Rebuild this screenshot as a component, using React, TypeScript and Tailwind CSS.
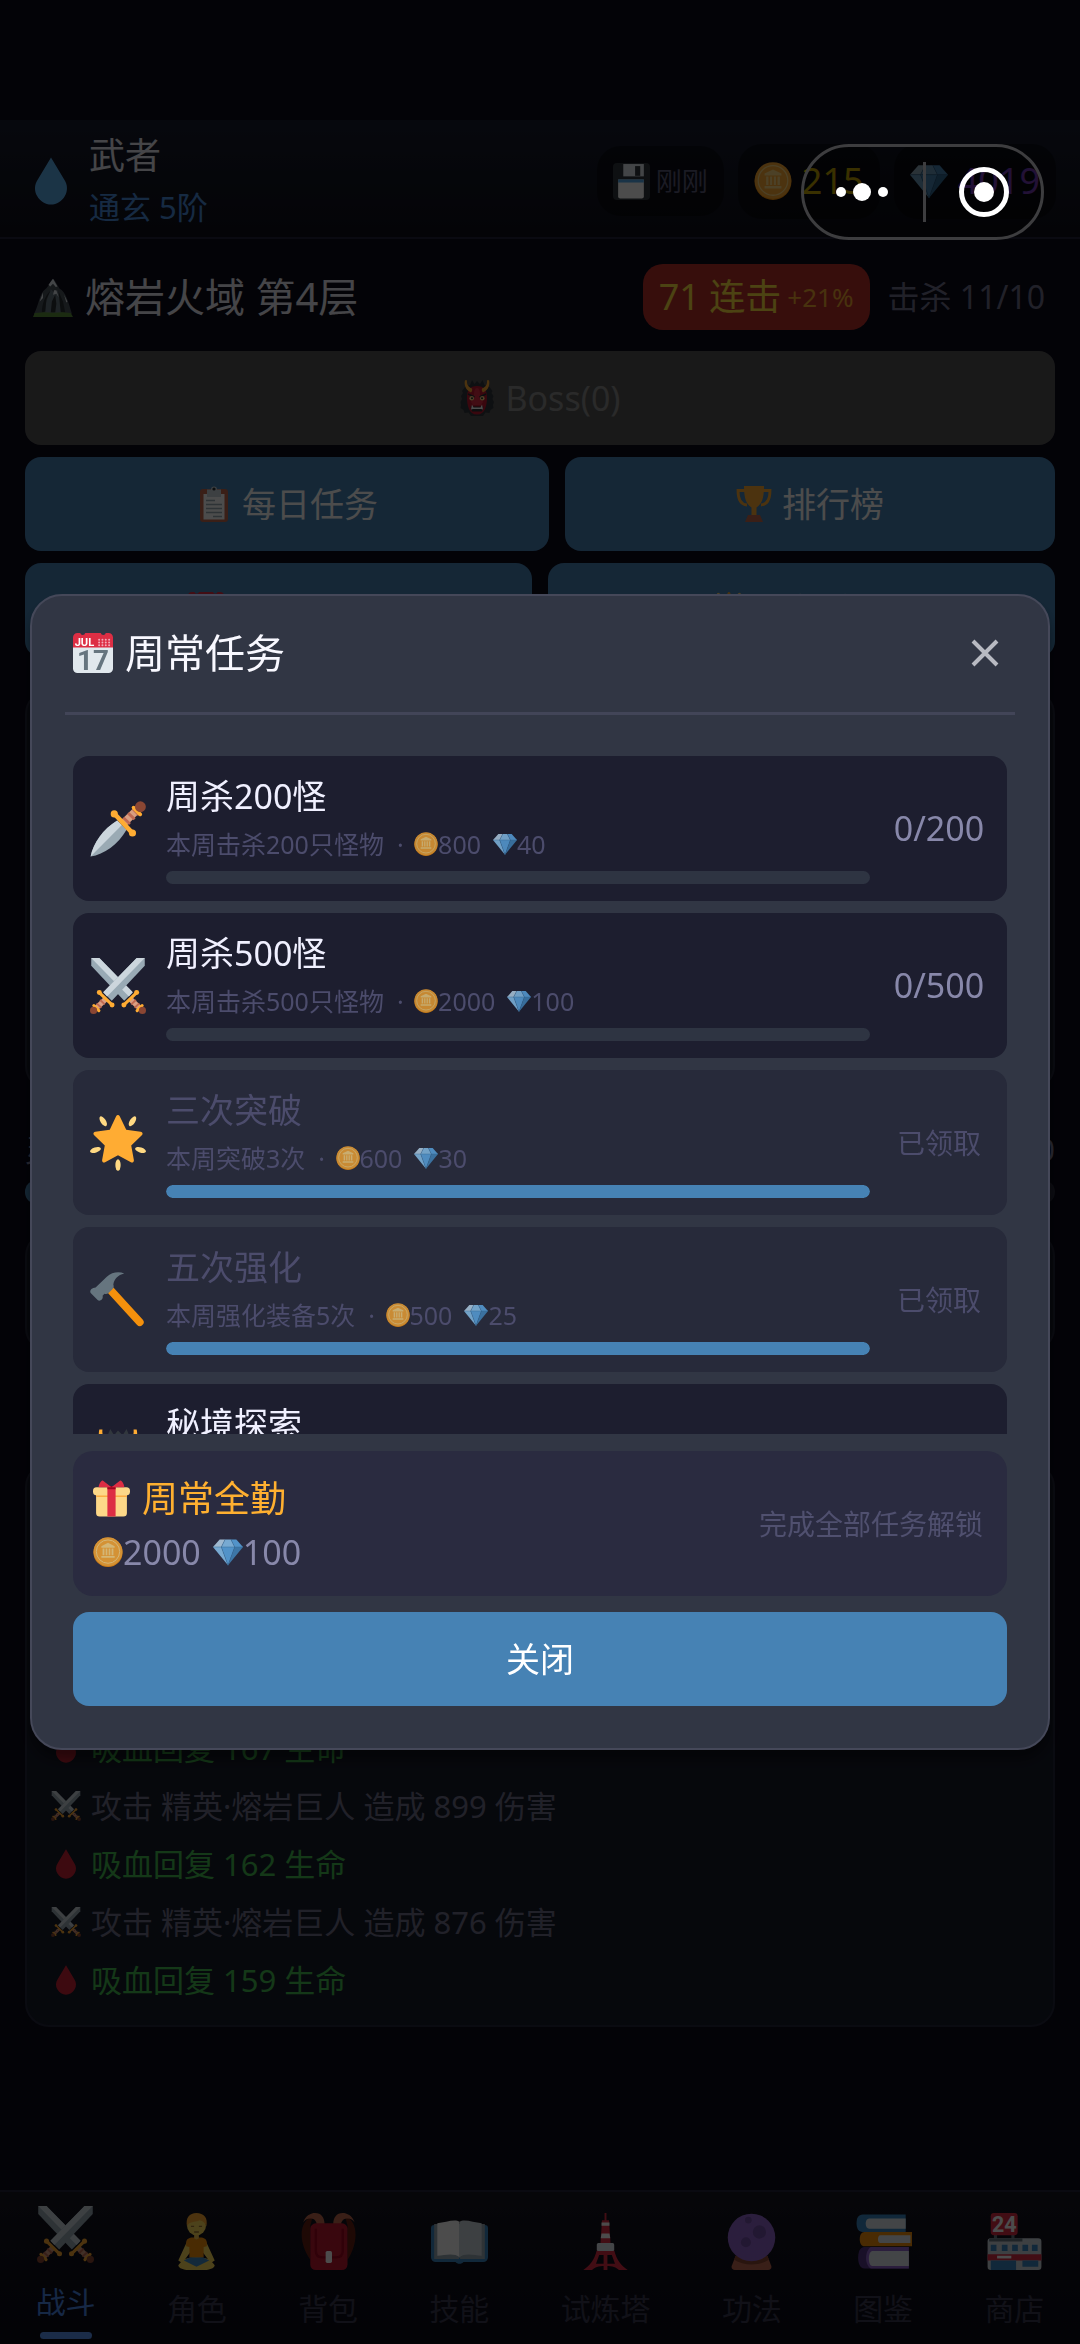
import React, { useState } from "react";
import type { ReactNode } from "react";

type TIconProps = { className?: string };

type TTask = {
  id: string;
  title: string;
  desc: string;
  gold: number;
  gems: number;
  current: number;
  target: number;
  claimed: boolean;
  icon: (props: TIconProps) => ReactNode;
};

type TLogEntry = { kind: "attack" | "heal"; text: string };

function Svg({ className, children }: { className?: string; children: ReactNode }) {
  return (
    <svg viewBox="0 0 36 36" className={`inline-block shrink-0 ${className ?? ""}`} aria-hidden="true">
      {children}
    </svg>
  );
}

const DROP = "M18 .4L28 17c2.6 3.7 2.6 8.600.4 12.200-2.200 4-6.200 6.400-10.400 6.400S9.800 33.200 7.600 29.200C5.400 25.600 5.400 20.700 8 17z";

function DropIcon({ className }: TIconProps) {
  return (
    <Svg className={className}>
      <path fill="#5DADEC" d={DROP} />
    </Svg>
  );
}

function BloodIcon({ className }: TIconProps) {
  return (
    <Svg className={className}>
      <path fill="#CC2336" d={DROP} />
    </Svg>
  );
}

function Sword() {
  return (
    <>
      <path fill="#99AAB5" d="M30 0h5.200v5L14 27.500 8.500 22z" />
      <path fill="#CCD6DD" d="M30 0h5.200L11 24.700 8.500 22z" />
      <path stroke="#D99E82" strokeWidth="3.400" d="M10 26.500l-6.500 6.200" />
      <path stroke="#BF6952" strokeWidth="1.200" d="M6.500 27l3 2.800M4.300 29.200l3 2.800" />
      <path stroke="#FFAC33" strokeWidth="2" strokeLinecap="round" d="M6 22.200l8.200 8M2.500 30.600l3.200 3.200" />
      <circle fill="#FFAC33" cx="6" cy="22.200" r="1.600" />
      <circle fill="#FFAC33" cx="14.200" cy="30.200" r="1.600" />
      <circle fill="#8A4633" cx="2.300" cy="33.700" r="2.300" />
    </>
  );
}

function SwordsIcon({ className }: TIconProps) {
  return (
    <Svg className={className}>
      <g transform="matrix(-1 0 0 1 36 0)">
        <Sword />
      </g>
      <Sword />
    </Svg>
  );
}

function DaggerIcon({ className }: TIconProps) {
  return (
    <Svg className={className}>
      <path fill="#9AAAB4" d="M.4 35.700C2 27 8.500 18 17.500 12.500l6 6C18 28 9 34.500.4 35.700z" />
      <path fill="#CCD6DD" d="M.4 35.700C2 27 8.500 18 17.500 12.500l3 3z" />
      <path stroke="#D99E82" strokeWidth="5" d="M21 14.800L31.500 4.500" />
      <path stroke="#BF6952" strokeWidth="1.800" d="M21.500 10.800l4.200 4M24.500 7.800l4.200 4M27.500 5l4 4" />
      <path stroke="#FFAC33" strokeWidth="2.400" strokeLinecap="round" d="M28 4.300l4.300 4.300" />
      <path stroke="#FFAC33" strokeWidth="3" d="M16 8.500l11 11.800" />
      <circle fill="#FFAC33" cx="15.600" cy="8.300" r="2.300" />
      <circle fill="#FFAC33" cx="27.300" cy="20.600" r="2.300" />
      <circle fill="#8A4633" cx="32.400" cy="3.700" r="3.500" />
    </Svg>
  );
}

function StarIcon({ className }: TIconProps) {
  return (
    <Svg className={className}>
      <path
        fill="#FFAC33"
        d="M16.800.8c.5-1 1.800-1 2.300 0l4.200 8.700 9.300 1.200c1.200.2 1.600 1.500.7 2.300l-6.800 6.600 1.700 9.300c.2 1.200-.9 2-1.900 1.400L18 25.900l-8.300 4.400c-1 .6-2.100-.2-1.900-1.400l1.700-9.300L2.700 13c-.9-.8-.5-2.100.7-2.300l9.300-1.200z"
      />
      <g fill="#FFD983">
        <ellipse cx="8.500" cy="4" rx="1.700" ry="3.600" transform="rotate(-33 8.500 4)" />
        <ellipse cx="27.300" cy="4" rx="1.700" ry="3.600" transform="rotate(33 27.300 4)" />
        <ellipse cx="3.500" cy="22.500" rx="1.700" ry="3.600" transform="rotate(72 3.500 22.500)" />
        <ellipse cx="32.500" cy="22.500" rx="1.700" ry="3.600" transform="rotate(-72 32.500 22.500)" />
        <ellipse cx="18" cy="32.200" rx="1.700" ry="3.700" />
      </g>
    </Svg>
  );
}

function HammerIcon({ className }: TIconProps) {
  return (
    <Svg className={className}>
      <path stroke="#F4900C" strokeWidth="5" strokeLinecap="round" d="M13.500 12L32 32.300" />
      <path
        fill="#66757F"
        d="M22 1C18.500-.5 14 .2 10.800 3L3.600 10c-1 .2-2 .3-2.700 1-.9.9-1 2-.3 2.700l4.300 4.300c.8.700 1.900.5 2.700-.3.700-.7.700-1.700.5-2.500l1.200-1.200c1 .2 1.900.2 2.600-.5l2.800-2.800c.7-.8.6-1.700.3-2.600C15.500 4.500 18 2 22 1z"
      />
    </Svg>
  );
}

function OgreIcon({ className }: TIconProps) {
  return (
    <Svg className={className}>
      <path
        fill="#31373D"
        d="M18 1l-2.500 3L13 0l-2 5-5 2-3 4 1 2-2 3 1 3-1.500 3L2 25l-.5 3 3 2 1 3 4-.5L12 36h12l2.500-3.500 4 .5 1-3 3-2-.5-3 1-3-1.500-3 1-3-2-3 1-2-3-4-5-2-2-5-2.500 4z"
      />
      <path fill="#BE1931" d="M18 6c7 0 10 4 10 11.500 0 4-.5 8-2 11.500-1.300 3.500-4 5.500-8 5.500S11.300 32.500 10 29c-1.500-3.500-2-7.500-2-11.500C8 10 11 6 18 6z" />
      <path fill="#DD2E44" d="M18 8c2 0 3 3 3 7l3 7-2 3h-8l-2-3 3-7c0-4 1-7 3-7z" />
      <path fill="#FFAC33" d="M6 .3C5 4 6 10 12 12.500c1-1 1.500-2.500 1-4C9.500 7.500 7.500 4.500 8 .3zM30 .3c1 3.700 0 9.700-6 12.200-1-1-1.500-2.500-1-4C26.500 7.500 28.500 4.500 28 .3z" />
      <path stroke="#292F33" strokeWidth="1.800" d="M9 14l6.500 3M27 14l-6.500 3" />
      <circle fill="#FFD983" cx="12.700" cy="18.300" r="2.300" />
      <circle fill="#FFD983" cx="23.300" cy="18.300" r="2.300" />
      <circle fill="#292F33" cx="13" cy="18.300" r="1" />
      <circle fill="#292F33" cx="23" cy="18.300" r="1" />
      <path fill="#292F33" d="M11.500 26.500h13l-1.500 5H13z" />
      <path fill="#FFF" d="M12 29.500l1-5 1.500 3h7l1.500-3 1 5-2-.5h-8z" />
    </Svg>
  );
}

function CoinIcon({ className }: TIconProps) {
  return (
    <Svg className={className}>
      <circle fill="#F4900C" cx="18" cy="18.500" r="17.500" />
      <circle fill="#FFAC33" cx="18" cy="17.500" r="17.300" />
      <circle fill="none" stroke="#FFD983" strokeWidth="1.200" cx="18" cy="17.500" r="14" />
      <path
        fill="#FFD983"
        d="M18 7l8 4v1.800H10V11zM11.500 13.800h2.200v8h-2.200zM15.200 13.800h2v8h-2zM18.800 13.800h2v8h-2zM22.300 13.800h2.200v8h-2.200zM10 22.800h16V25H10z"
      />
    </Svg>
  );
}

function GemIcon({ className }: TIconProps) {
  return (
    <Svg className={className}>
      <path fill="#BDDDF4" d="M8 3h6.500L10 12H0z" />
      <path fill="#8CCAF7" d="M14.500 3h7L26 12H10z" />
      <path fill="#5DADEC" d="M21.500 3H28l8 9H26z" />
      <path fill="#8CCAF7" d="M0 12h10l8 22z" />
      <path fill="#5DADEC" d="M10 12h16l-8 22z" />
      <path fill="#4289C1" d="M26 12h10L18 34z" />
      <path fill="none" stroke="#3A7CAE" strokeWidth=".6" d="M0 12h36M14.500 3L10 12l8 22 8-22-4.500-9" />
    </Svg>
  );
}

function CalendarIcon({ className }: TIconProps) {
  return (
    <Svg className={className}>
      <path fill="#E1E8ED" d="M0 10h36v22a4 4 0 0 1-4 4H4a4 4 0 0 1-4-4z" />
      <path fill="#DD2E44" d="M4 0h2.500a2.300 2.300 0 0 0 4.500 0h14a2.300 2.300 0 0 0 4.500 0H32a4 4 0 0 1 4 4v9H0V4a4 4 0 0 1 4-4z" />
      <g fill="#F4ABBA">
        {[23.500, 26.500, 29.500, 32.500].map((x) => (
          <g key={x}>
            <circle cx={x} cy="6" r=".9" />
            <circle cx={x} cy="8.500" r=".9" />
            <circle cx={x} cy="11" r=".9" />
          </g>
        ))}
      </g>
      <text x="1.500" y="11.600" fontSize="10" fontWeight="700" fill="#FFF" fontFamily="Roboto, sans-serif">
        JUL
      </text>
      <text x="18" y="33" fontSize="25" textAnchor="middle" fontWeight="700" fill="#66757F" fontFamily="Roboto, sans-serif">
        17
      </text>
    </Svg>
  );
}

function GiftIcon({ className }: TIconProps) {
  return (
    <Svg className={className}>
      <path fill="#FDD888" d="M3 14h30v18a3.500 3.500 0 0 1-3.500 3.500h-23A3.500 3.500 0 0 1 3 32z" />
      <path fill="#FCAB40" d="M3 14h30v2.500H3z" />
      <rect fill="#FDD888" y="7" width="36" height="8" rx="3.500" />
      <path fill="#DD2E44" d="M14 7h8v28.500h-8z" />
      <path fill="#A0041E" d="M14 6h8v3h-8z" />
      <path fill="#DD2E44" d="M18 7L9.500.5C8 0 5.500 4.500 5.500 7zM18 7L26.500.5c1.500-.5 4 4 4 6.500z" />
    </Svg>
  );
}

function FloppyIcon({ className }: TIconProps) {
  return (
    <Svg className={className}>
      <rect fill="#31373D" width="36" height="36" rx="4" />
      <path fill="#E1E8ED" d="M10 1h20v12H10z" />
      <path fill="#31373D" d="M21.500 3h5v9.500h-5z" />
      <path fill="#FFF" d="M5 16h25v16.500a2 2 0 0 1-2 2H7a2 2 0 0 1-2-2z" />
      <path fill="#55ACEE" d="M5 16h25v3H5z" />
    </Svg>
  );
}

function MountainIcon({ className }: TIconProps) {
  return (
    <Svg className={className}>
      <path fill="#4B545D" d="M1 33C5 26 6 14 11 11c3-2 4-7 7-9.500 2 1.500 4 6 6 9 5 2 8 12 11 22.500z" />
      <path fill="#67757F" d="M11 33c0-9 2-15 5-22l3 3 3-2 2 6 3 15z" />
      <path fill="#292F33" d="M16 12l-4 8-1 11-3 1c0-8 3-15 8-20zM23 13l4 9 2 10h-4zM17 22l3-6 1 8-1 8h-4z" />
      <path fill="#E1E8ED" d="M18 1.500L14 7l1.500 1.500L18 6l2.500 3 1.500-.5zM9 14l-3 8 3-3zM19 12l-1 4 3-1 2 3-2-6zM28 16l3 6-1 1z" />
      <path fill="#5C913B" d="M1.500 32.300l8.500-.6 8 .5 9-.5 7 .6 2 3.700H0z" />
    </Svg>
  );
}

function ClipboardIcon({ className }: TIconProps) {
  return (
    <Svg className={className}>
      <rect fill="#C1694F" x="4" y="3" width="28" height="33" rx="3" />
      <path fill="#FFF" d="M7.500 8h21v25.500h-21z" />
      <path fill="#CCD6DD" d="M11 3.500h4a3 3 0 0 1 6 0h4V11H11z" />
      <circle fill="#292F33" cx="18" cy="3" r="1.600" />
      <path stroke="#99AAB5" strokeWidth="1.600" d="M10 14.500h9M10 18.500h16M10 22.500h16M10 26.500h16M17 30.500h9" />
    </Svg>
  );
}

function TrophyIcon({ className }: TIconProps) {
  return (
    <Svg className={className}>
      <path fill="none" stroke="#FFAC33" strokeWidth="2.800" d="M9 4.500H2c0 9 3 14 9 14.500M27 4.500h7c0 9-3 14-9 14.500" />
      <path fill="#FFAC33" d="M8 0h20c0 12-2 18-7.500 21.500V30h-5v-8.500C10 18 8 12 8 0z" />
      <path fill="#C1694F" d="M12 29h12l3 7H9z" />
    </Svg>
  );
}

function LotusIcon({ className }: TIconProps) {
  return (
    <Svg className={className}>
      <path fill="#FFDC5D" d="M12 18L6.500 30l2.500 1.500 6-8zM24 18l5.500 12-2.500 1.500-6-8z" />
      <path fill="#FFDC5D" d="M9 30c4-3 14-3 18 0l2.500 3c0 2-4 3-6 3h-11c-2 0-6-1-6-3z" />
      <path fill="#4289C1" d="M14 28h8l4 2-8 4-8-4z" />
      <path fill="#F4900C" d="M11.500 18.500c0-2 2-3 4-3h5c2 0 4 1 4 3V21l-2 .5V28h-9v-6.500l-2-.5z" />
      <path fill="#F9CA55" d="M16.500 12h3v4c-1 .9-2 .9-3 0z" />
      <circle fill="#FFDC5D" cx="18" cy="8" r="6" />
      <path fill="#FFAC33" d="M12 8.500C11 3 13.500 0 18 0s7.500 3 6.200 8.500C23.500 6 22 5 20 4.500 17 6 13 5 12 8.500z" />
      <path stroke="#A07A30" strokeWidth=".8" fill="none" d="M14.500 8.500h2M19.500 8.500h2M16.500 12h3" />
    </Svg>
  );
}

function BackpackIcon({ className }: TIconProps) {
  return (
    <Svg className={className}>
      <path fill="#662113" d="M8 2C-1 5-1 19 6.500 29.500V8zM28.500 2C37 5 37 19 30 29.500V8z" />
      <path fill="#C1694F" d="M2 6C3.500 1.500 7 0 9.500 0c4 0 6 3 6 7h-5c0-2-2-4-4-3.500C4.500 3.500 3 4.500 2 6zM34.500 6C33 1.500 29.500 0 27 0c-4 0-6 3-6 7h5c0-2 2-4 4-3.500 2 0 3.500 1 4.500 2.500z" />
      <rect fill="#BE1931" x="6.500" y="6.500" width="23.500" height="29.500" rx="3.500" />
      <path fill="none" stroke="#A0041E" strokeWidth="1.500" d="M10 10v14c0 3 2 4 4 4h9c2 0 4-1 4-4V10" />
      <rect fill="#FFF" x="16.200" y="24" width="4" height="7.500" rx="1" />
    </Svg>
  );
}

function BookIcon({ className }: TIconProps) {
  return (
    <Svg className={className}>
      <path fill="#3B88C3" d="M2 7.500h32a2 2 0 0 1 2 2V28a3 3 0 0 1-3 3H20.500c-1 1.500-4 1.500-5 0H3a3 3 0 0 1-3-3V9.500a2 2 0 0 1 2-2z" />
      <path fill="#99AAB5" d="M2 7h32v22H18.500L18 28l-.5 1H2z" />
      <path fill="#FFF" d="M4 6.500c5-.5 11-3 14-1V28c-3-3-9-1.500-14-1z" />
      <path fill="#CCD6DD" d="M32 6.500c-5-.5-11-3-14-1V28c3-3 9-1.500 14-1z" />
    </Svg>
  );
}

function TowerIcon({ className }: TIconProps) {
  return (
    <Svg className={className}>
      <path stroke="#DD2E44" strokeWidth="1.200" d="M18 0v5" />
      <path fill="#DD2E44" d="M15.800 4.500h4.400L21.500 24h-7z" />
      <path fill="#FFF" d="M15.500 6h5v2h-5zM15.500 13h5l.5 3h-6z" />
      <path fill="#DD2E44" d="M12.500 23.500h11C25 30 28 33 32 36h-5.500c-2-1.700-3.500-2.500-8.500-2.500s-6.500.8-8.500 2.500H4c4-3 7-6 8.500-12.500zm1.500 3l-2 5.500h12l-2-5.500z" fillRule="evenodd" />
      <path fill="#DD2E44" d="M16.800 24h2.400v12h-2.400z" />
      <rect fill="#E1E8ED" x="12.500" y="19" width="11" height="5" rx="1" />
    </Svg>
  );
}

function CrystalIcon({ className }: TIconProps) {
  return (
    <Svg className={className}>
      <path fill="#BF6952" d="M8 27h20l2.500 6.500c.4 1.500-.5 2.500-2 2.500h-21c-1.500 0-2.400-1-2-2.500z" />
      <path fill="#8A4633" d="M8 27h20l1 2.500c-6 4-16 4-22 0z" />
      <circle fill="#9266CC" cx="18" cy="15.500" r="15" />
      <circle fill="#7450A8" cx="23" cy="12" r="4.200" />
      <circle fill="#7450A8" cx="14.500" cy="18.500" r="3.200" />
      <circle fill="#7450A8" cx="16" cy="4.500" r="2.100" />
    </Svg>
  );
}

function BooksIcon({ className }: TIconProps) {
  return (
    <Svg className={className}>
      <path fill="#3B88C3" d="M5 1h27v11H5C2 12 1 9.500 1 6.500S2 1 5 1z" />
      <path fill="#E1E8ED" d="M9 3.500h23V10H9C6 10 6 3.500 9 3.500z" />
      <path fill="#F4900C" d="M6 12h30v9H6c-2 0-3-2-3-4.500S4 12 6 12z" />
      <path fill="#E1E8ED" d="M16 14h19v5H16c-2 0-2-5 0-5z" />
      <path fill="#553788" d="M6 21.500h28V35H6c-3 0-4-3.500-4-6.800s1-6.700 4-6.700z" />
      <path fill="#9266CC" d="M10 21.500h24V35H10c-4-2-4-11 0-13.500z" />
      <path fill="#E1E8ED" d="M11 24h23v9.500H11c-3 0-3-9.500 0-9.500z" />
    </Svg>
  );
}

function StoreIcon({ className }: TIconProps) {
  return (
    <Svg className={className}>
      <path fill="#66757F" d="M5 13h2v4H5zM16 13h2v4h-2z" />
      <rect fill="#DD2E44" x="3" width="17" height="14" rx="2" />
      <text x="11.500" y="11.800" fontSize="13.500" textAnchor="middle" fontWeight="700" fill="#FFF" fontFamily="Roboto, sans-serif">
        24
      </text>
      <rect fill="#CCD6DD" x="1" y="16" width="34" height="20" rx="2" />
      <path fill="#66757F" d="M2 16h21v2H2z" />
      <path fill="#3B88C3" d="M3 20h3.600v4H3zM10 20h3.600v4H10zM16.500 20h3.600v4h-3.600zM23 20h3.600v4H23zM29 20h3.600v4H29z" />
      <path fill="#DD2E44" d="M1 26h34v4H1z" />
      <path fill="#3B88C3" d="M3 30h16v6H3zM23 30h10v4H23z" />
      <path fill="#FFF" d="M7 27h9v1.700H7z" />
    </Svg>
  );
}

const TASKS: TTask[] = [
  { id: "kill200", title: "周杀200怪", desc: "本周击杀200只怪物", gold: 800, gems: 40, current: 0, target: 200, claimed: false, icon: DaggerIcon },
  { id: "kill500", title: "周杀500怪", desc: "本周击杀500只怪物", gold: 2000, gems: 100, current: 0, target: 500, claimed: false, icon: SwordsIcon },
  { id: "break3", title: "三次突破", desc: "本周突破3次", gold: 600, gems: 30, current: 3, target: 3, claimed: true, icon: StarIcon },
  { id: "forge5", title: "五次强化", desc: "本周强化装备5次", gold: 500, gems: 25, current: 5, target: 5, claimed: true, icon: HammerIcon },
  { id: "secret", title: "秘境探索", desc: "本周探索秘境3次", gold: 800, gems: 40, current: 0, target: 3, claimed: false, icon: OgreIcon },
];

const LOGS: TLogEntry[] = [
  { kind: "heal", text: "吸血回复 167 生命" },
  { kind: "attack", text: "攻击 精英·熔岩巨人 造成 899 伤害" },
  { kind: "heal", text: "吸血回复 162 生命" },
  { kind: "attack", text: "攻击 精英·熔岩巨人 造成 876 伤害" },
  { kind: "heal", text: "吸血回复 159 生命" },
];

const TABS = [
  { label: "战斗", icon: SwordsIcon },
  { label: "角色", icon: LotusIcon },
  { label: "背包", icon: BackpackIcon },
  { label: "技能", icon: BookIcon },
  { label: "试炼塔", icon: TowerIcon },
  { label: "功法", icon: CrystalIcon },
  { label: "图鉴", icon: BooksIcon },
  { label: "商店", icon: StoreIcon },
];

function TopBar() {
  return (
    <header className="flex items-center justify-between border-b-2 border-[#24243a] bg-linear-to-b from-[#161c2e] to-[#0f0f18] pt-[10px] pr-6 pb-[5px] pl-[27px]">
      <div className="flex items-center gap-[14px]">
        <DropIcon className="size-12" />
        <div>
          <div className="text-[36px] leading-[52px] text-[#e8e8f0]">武者</div>
          <div className="text-[31px] leading-[50px] text-[#4a8cdc]">通玄 5阶</div>
        </div>
      </div>
      <div className="flex items-center gap-[14px]">
        <div className="flex h-[70px] items-center gap-[6px] rounded-3xl bg-black/40 px-4 text-[26px] text-[#5a5a78]">
          <FloppyIcon className="size-[37px]" />
          刚刚
        </div>
        <div className="flex h-[75px] items-center gap-[10px] rounded-3xl bg-black/40 px-4 text-[36px] text-[#ffd700]">
          <CoinIcon className="size-[38px]" />
          215
        </div>
        <div className="flex h-[75px] items-center gap-[10px] rounded-3xl bg-black/40 px-4 text-[36px] text-[#9a4df0]">
          <GemIcon className="size-[38px]" />
          4019
        </div>
      </div>
    </header>
  );
}

function ActionButton({ icon, children }: { icon: ReactNode; children: ReactNode }) {
  return (
    <button className="flex h-[94px] flex-auto items-center justify-center gap-[10px] rounded-2xl bg-[#4682b4] text-[34px] text-white">
      {icon}
      {children}
    </button>
  );
}

function BattleLog() {
  return (
    <section className="mt-[111px] flex h-[564px] flex-col justify-end overflow-hidden rounded-3xl border-2 border-[#24263a] bg-[#171b2a] px-6 pb-4">
      {LOGS.map((log) => (
        <p
          key={log.text}
          className={`flex h-[58px] shrink-0 items-center gap-[10px] text-[31px] ${
            log.kind === "heal" ? "text-[#44bb50]" : "text-[#70708a]"
          }`}
        >
          {log.kind === "heal" ? <BloodIcon className="size-[30px]" /> : <SwordsIcon className="size-[30px]" />}
          {log.text}
        </p>
      ))}
    </section>
  );
}

function TabBar() {
  return (
    <nav className="mt-auto flex h-[154px] border-t-2 border-[#24243a] bg-linear-to-b from-[#15151f] to-[#0a0a16]">
      {TABS.map((tab, i) => {
        const Icon = tab.icon;
        const active = i === 0;
        return (
          <button
            key={tab.label}
            className={`flex flex-auto flex-col items-center text-[30px] leading-[38px] ${
              active ? "pt-[14px] text-[#4a86e8]" : "pt-[21px] text-[#3a3a50]"
            }`}
          >
            <Icon className="size-[57px]" />
            <span className="mt-5">{tab.label}</span>
            {active && <span className="mt-[11px] h-[7px] w-[52px] rounded-full bg-[#5a94f0]" />}
          </button>
        );
      })}
    </nav>
  );
}

function Reward({ gold, gems, iconClass }: { gold: number; gems: number; iconClass: string }) {
  return (
    <span className="inline-flex items-center">
      <CoinIcon className={iconClass} />
      {gold}
      <GemIcon className={`ml-3 ${iconClass}`} />
      {gems}
    </span>
  );
}

function TaskRow({ task }: { task: TTask }) {
  const Icon = task.icon;
  const percent = Math.min(100, (task.current / task.target) * 100);

  return (
    <li
      className={`flex h-[145px] shrink-0 items-center rounded-2xl px-[17px] ${
        task.claimed ? "bg-[#272a3a]" : "bg-[#1d1e2f]"
      }`}
    >
      <Icon className="size-14" />
      <div className="ml-5 flex-1">
        <div className={`text-[34px] leading-[46px] ${task.claimed ? "text-[#4c4c6c]" : "text-[#f0f0ff]"}`}>
          {task.title}
        </div>
        <div className="flex items-center gap-1 text-[25px] leading-[50px] text-[#4c4c6c]">
          <span className="whitespace-pre">{`${task.desc}  · `}</span>
          <Reward gold={task.gold} gems={task.gems} iconClass="size-6 opacity-75" />
        </div>
        <div
          role="progressbar"
          aria-label={task.title}
          aria-valuenow={percent}
          className="mt-[2px] h-[13px] overflow-hidden rounded-full bg-[#2e3442]"
        >
          <div className="h-full rounded-full bg-[#4682b4]" style={{ width: `${percent}%` }} />
        </div>
      </div>
      <div className="ml-[18px] w-[102px] text-center">
        {task.claimed ? (
          <span className="text-[28px] text-[#4c4c6c]">已领取</span>
        ) : (
          <span className="text-[34px] text-[#8888aa]">{`${task.current}/${task.target}`}</span>
        )}
      </div>
    </li>
  );
}

function WeeklyModal({ onClose }: { onClose: () => void }) {
  return (
    <div className="fixed inset-0 z-40 flex items-center justify-center bg-black/70 px-[30px]">
      <div
        role="dialog"
        aria-label="周常任务"
        className="w-full rounded-[32px] border-2 border-[#454859] bg-[#313644] px-[33px] pb-[42px] shadow-[0_10px_12px_rgba(0,0,0,0.4)]"
      >
        <div className="flex h-[119px] items-center justify-between border-b-[3px] border-[#424558] pr-4 pb-[2px] pl-2">
          <h2 className="flex items-center gap-3 text-[40px] text-[#f8f8ff]">
            <CalendarIcon className="size-10" />
            周常任务
          </h2>
          <button aria-label="关闭窗口" onClick={onClose}>
            <svg viewBox="0 0 28 28" className="size-7" aria-hidden="true">
              <path d="M2 2l24 24M26 2L2 26" stroke="#b8bac2" strokeWidth="4" />
            </svg>
          </button>
        </div>
        <div className="px-2 pt-[41px]">
          <ul className="flex h-[678px] flex-col gap-3 overflow-hidden">
            {TASKS.map((task) => (
              <TaskRow key={task.id} task={task} />
            ))}
          </ul>
          <div className="mt-[17px] flex h-[145px] items-center justify-between rounded-[20px] bg-[#2a2b40] pr-6 pl-5">
            <div className="pt-1">
              <div className="flex items-center gap-3 text-[36px] leading-[54px] text-[#ffb030]">
                <GiftIcon className="size-[37px]" />
                周常全勤
              </div>
              <div className="text-[34px] leading-[52px] text-[#8888aa]">
                <Reward gold={2000} gems={100} iconClass="size-[30px] opacity-80" />
              </div>
            </div>
            <span className="text-[28px] text-[#50506f]">完成全部任务解锁</span>
          </div>
          <button className="mt-4 h-[94px] w-full rounded-2xl bg-[#4682b4] text-[34px] text-white" onClick={onClose}>
            关闭
          </button>
        </div>
      </div>
    </div>
  );
}

// host capsule, always above the page
function Capsule() {
  return (
    <div className="fixed top-[144px] right-9 z-50 flex h-24 w-[243px] items-center rounded-full border-[3px] border-[#3d3d3f] bg-black/25">
      <button className="flex h-full flex-1 items-center justify-center gap-[7px] pr-1" aria-label="更多">
        <span className="size-[10px] rounded-full bg-white" />
        <span className="size-[18px] rounded-full bg-white" />
        <span className="size-[10px] rounded-full bg-white" />
      </button>
      <span className="h-[60px] w-[3px] bg-[#3d3d3f]" />
      <button className="flex h-full flex-1 items-center justify-center" aria-label="退出">
        <span className="flex size-[50px] items-center justify-center rounded-full border-[5px] border-white">
          <span className="size-5 rounded-full bg-white" />
        </span>
      </button>
    </div>
  );
}

export default function App() {
  const [isWeeklyOpen, setIsWeeklyOpen] = useState<boolean>(true);

  return (
    <div className="flex min-h-screen flex-col bg-[#0b0a1a] pt-[120px] font-['Noto_Sans','Noto_Sans_CJK_SC',sans-serif]">
      <TopBar />
      <main className="px-[25px]">
        <div className="flex h-28 items-center justify-between pt-1 pr-[10px] pl-2">
          <h1 className="flex items-center gap-3 text-[40px] text-[#e8e8f0]">
            <MountainIcon className="size-10" />
            熔岩火域 第4层
          </h1>
          <div className="flex items-center gap-[18px]">
            <div className="flex h-[66px] items-center gap-[6px] rounded-[20px] bg-[#b8302a] px-4">
              <span className="text-[36px] text-[#ffe040]">71 连击</span>
              <span className="text-[26px] text-[#f0a830]">+21%</span>
            </div>
            <span className="text-[32px] text-[#70708a]">击杀 11/10</span>
          </div>
        </div>

        <div className="flex flex-col gap-3">
          <button
            className="flex h-[94px] items-center justify-center gap-[10px] rounded-2xl bg-[#555555] text-[34px] text-[#8c8c8c]"
            disabled
          >
            <OgreIcon className="size-9" />
            Boss(0)
          </button>
          <div className="flex gap-4">
            <ActionButton icon={<ClipboardIcon className="size-9" />}>每日任务</ActionButton>
            <ActionButton icon={<TrophyIcon className="size-9" />}>排行榜</ActionButton>
          </div>
          <div className="flex gap-4">
            <ActionButton icon={<CalendarIcon className="size-9" />}>周常任务</ActionButton>
            <ActionButton icon={<StarIcon className="size-9" />}>成就奖励</ActionButton>
          </div>
        </div>

        {/* enemy, exp bar and player panels */}
        <section className="mt-[33px] h-[400px] rounded-3xl border-2 border-[#24263a] bg-[#171b2a]" />
        <div className="mt-10 flex justify-between text-[30px] leading-[40px] text-[#8888aa]">
          <span>灵气</span>
          <span>0/100</span>
        </div>
        <div className="mt-[10px] h-6 rounded-full bg-[#2a2a3c]">
          <div className="h-full w-1/2 rounded-full bg-[#4682b4]" />
        </div>
        <section className="mt-7 h-[120px] rounded-3xl border-2 border-[#24263a] bg-[#171b2a]" />
        <BattleLog />
      </main>
      <TabBar />
      {isWeeklyOpen && <WeeklyModal onClose={() => setIsWeeklyOpen(false)} />}
      <Capsule />
    </div>
  );
}
